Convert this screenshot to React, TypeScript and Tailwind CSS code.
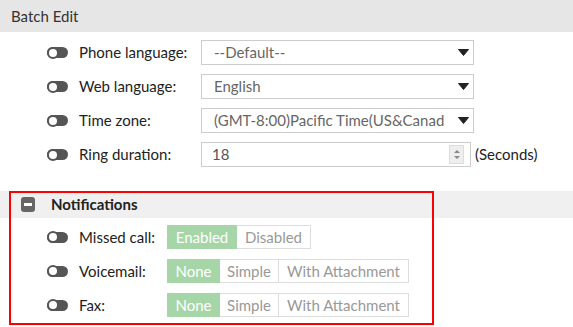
import React from "react";

const font = { fontFamily: "Lato, 'Open Sans', sans-serif" };

function Toggle() {
  return (
    <div className="flex items-center w-[21px] h-[11px] rounded-full bg-[#555]">
      <div className="w-[12px] h-[12px] rounded-full bg-white border-[2px] border-[#555]"></div>
    </div>
  );
}

function Caret() {
  return (
    <svg width="11" height="7" viewBox="0 0 11 7" className="shrink-0">
      <path d="M0.5 0.5 L10.5 0.5 L5.5 6.5 Z" fill="#222" stroke="#222" strokeLinejoin="round" />
    </svg>
  );
}

function SelectBox({ value }: { value: string }) {
  return (
    <div className="flex items-center w-[273px] h-[25px] border border-[#ccc] bg-white pl-[12px] pr-[4px]">
      <span className="flex-1 min-w-0 mr-[6px] text-[15px] text-[#666] whitespace-nowrap">{value}</span>
      <Caret />
    </div>
  );
}

function Row({ label, children }: { label: string; children: React.ReactNode }) {
  return (
    <div className="flex items-center h-[25px]">
      <Toggle />
      <span className="w-[122px] ml-[11px] text-[15px] text-[#222]">{label}</span>
      {children}
    </div>
  );
}

const segWidths: Record<string, string> = {
  Enabled: "w-[70px]",
  Disabled: "w-[74px]",
  None: "w-[53px]",
  Simple: "w-[59px]",
  "With Attachment": "w-[130px]",
};

function Segments({ items }: { items: string[] }) {
  return (
    <div className="flex h-[24px] text-[15px]">
      {items.map((item, i) =>
        i === 0 ? (
          <span key={i} className={`flex items-center justify-center ${segWidths[item]} bg-[#a6d6a8] text-white border border-[#a6d6a8]`}>
            {item}
          </span>
        ) : (
          <span key={i} className={`flex items-center justify-center ${segWidths[item]} bg-white text-[#999] border border-l-0 border-[#ddd]`}>
            {item}
          </span>
        )
      )}
    </div>
  );
}

function NotifRow({ label, items }: { label: string; items: string[] }) {
  return (
    <div className="flex items-center h-[24px]">
      <Toggle />
      <span className="w-[88px] ml-[11px] text-[15px] text-[#222]">{label}</span>
      <Segments items={items} />
    </div>
  );
}

export default function App() {
  return (
    <div className="w-[573px] h-[327px] bg-white overflow-hidden" style={font}>
      <div className="h-[32px] bg-[#e6e6e6] flex items-center pl-[11px] text-[15px] text-[#333]">Batch Edit</div>

      <div className="pl-[47px] pt-[8px] flex flex-col gap-[9px]">
        <Row label="Phone language:">
          <SelectBox value="--Default--" />
        </Row>
        <Row label="Web language:">
          <SelectBox value="English" />
        </Row>
        <Row label="Time zone:">
          {/* the select only has room for this much of the value */}
          <SelectBox value="(GMT-8:00)Pacific Time(US&Canad" />
        </Row>
        <Row label="Ring duration:">
          <div className="flex items-center w-[270px] h-[25px] border border-[#ccc] bg-white pl-[10px] pr-[6px]">
            <span className="flex-1 text-[15px] text-[#555]">18</span>
            <div className="flex flex-col items-center justify-center gap-[3px] w-[15px] h-[19px] bg-[#eee] border border-[#ddd]">
              <div className="w-0 h-0 border-l-[3px] border-r-[3px] border-b-[3px] border-l-transparent border-r-transparent border-b-[#888]"></div>
              <div className="w-0 h-0 border-l-[3px] border-r-[3px] border-t-[3px] border-l-transparent border-r-transparent border-t-[#888]"></div>
            </div>
          </div>
          <span className="ml-[4px] text-[15px] text-[#222]">(Seconds)</span>
        </Row>
      </div>

      <div className="relative mt-[24px]">
        <div className="h-[27px] bg-[#f0f0f0] flex items-center pl-[21px]">
          <div className="flex items-center justify-center w-[14px] h-[15px] rounded-[3px] bg-[#666]">
            <div className="w-[8px] h-[3px] bg-white"></div>
          </div>
          <span className="ml-[16px] text-[15px] font-bold text-[#222]">Notifications</span>
        </div>
        <div className="pl-[47px] pt-[7px] flex flex-col gap-[10px]">
          <NotifRow label="Missed call:" items={["Enabled", "Disabled"]} />
          <NotifRow label="Voicemail:" items={["None", "Simple", "With Attachment"]} />
          <NotifRow label="Fax:" items={["None", "Simple", "With Attachment"]} />
        </div>
        <div className="absolute left-[9px] top-0 w-[425px] h-[134px] border-2 border-[#ff0000]"></div>
      </div>
    </div>
  );
}
